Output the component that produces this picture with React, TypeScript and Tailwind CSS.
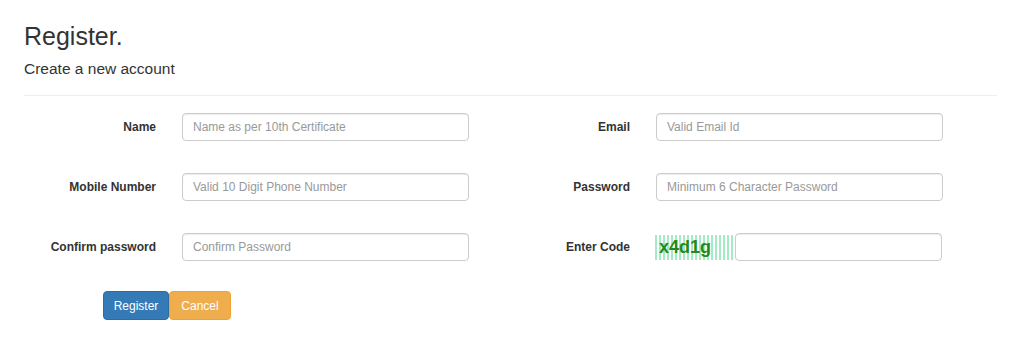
import React from "react"

interface FieldProps {
  label: string
  placeholder?: string
  type?: string
}

function Field({ label, placeholder, type = "text" }: FieldProps) {
  return (
    <div className="flex items-center h-[28px]">
      <label className="w-[132px] text-right text-[12px] font-bold text-[#333]">{label}</label>
      <input
        type={type}
        placeholder={placeholder}
        className="ml-[26px] w-[287px] h-[28px] px-[10px] text-[12px] text-[#555] border border-[#ccc] rounded-[4px] shadow-[inset_0_1px_1px_rgba(0,0,0,0.075)] placeholder:text-[#999] outline-none"
      />
    </div>
  )
}

function CaptchaField() {
  return (
    <div className="flex items-center h-[28px]">
      <label className="w-[132px] text-right text-[12px] font-bold text-[#333]">Enter Code</label>
      <div className="ml-[25px] flex items-center">
        <div className="w-[80px] h-[25px] flex items-center pl-[4px] text-[18px] font-bold text-[#1f8a1f] leading-none bg-[repeating-linear-gradient(90deg,#a4eac4_0px,#a4eac4_2px,#ffffff_2px,#ffffff_4px)]">
          x4d1g
        </div>
        <input
          type="text"
          className="w-[207px] h-[28px] px-[10px] text-[12px] border border-[#ccc] rounded-[4px] shadow-[inset_0_1px_1px_rgba(0,0,0,0.075)] outline-none"
        />
      </div>
    </div>
  )
}

export default function App() {
  return (
    <div className="w-[1024px] h-[364px] bg-white pl-[24px] pr-[27px] pt-[22px] font-['Liberation_Sans',Arial,sans-serif] text-[#333]">
      <h2 className="text-[25px] leading-[28px] font-normal">Register.</h2>
      <h4 className="mt-[10px] text-[15.5px] leading-[18px] font-normal">Create a new account</h4>
      <hr className="mt-[17px] border-0 border-t border-[#eee]" />

      <div className="mt-[17px] grid grid-cols-[474px_474px] gap-y-[32px]">
        <Field label="Name" placeholder="Name as per 10th Certificate" />
        <Field label="Email" placeholder="Valid Email Id" type="email" />
        <Field label="Mobile Number" placeholder="Valid 10 Digit Phone Number" />
        <Field label="Password" placeholder="Minimum 6 Character Password" type="password" />
        <Field label="Confirm password" placeholder="Confirm Password" type="password" />
        <CaptchaField />
      </div>

      <div className="mt-[30px] ml-[79px] flex">
        <button className="w-[66px] h-[29px] bg-[#337ab7] border border-[#2e6da4] text-white text-[12px] rounded-[4px]">
          Register
        </button>
        <button className="w-[62px] h-[29px] bg-[#f0ad4e] border border-[#eea236] text-white text-[12px] rounded-[4px]">
          Cancel
        </button>
      </div>
    </div>
  )
}
